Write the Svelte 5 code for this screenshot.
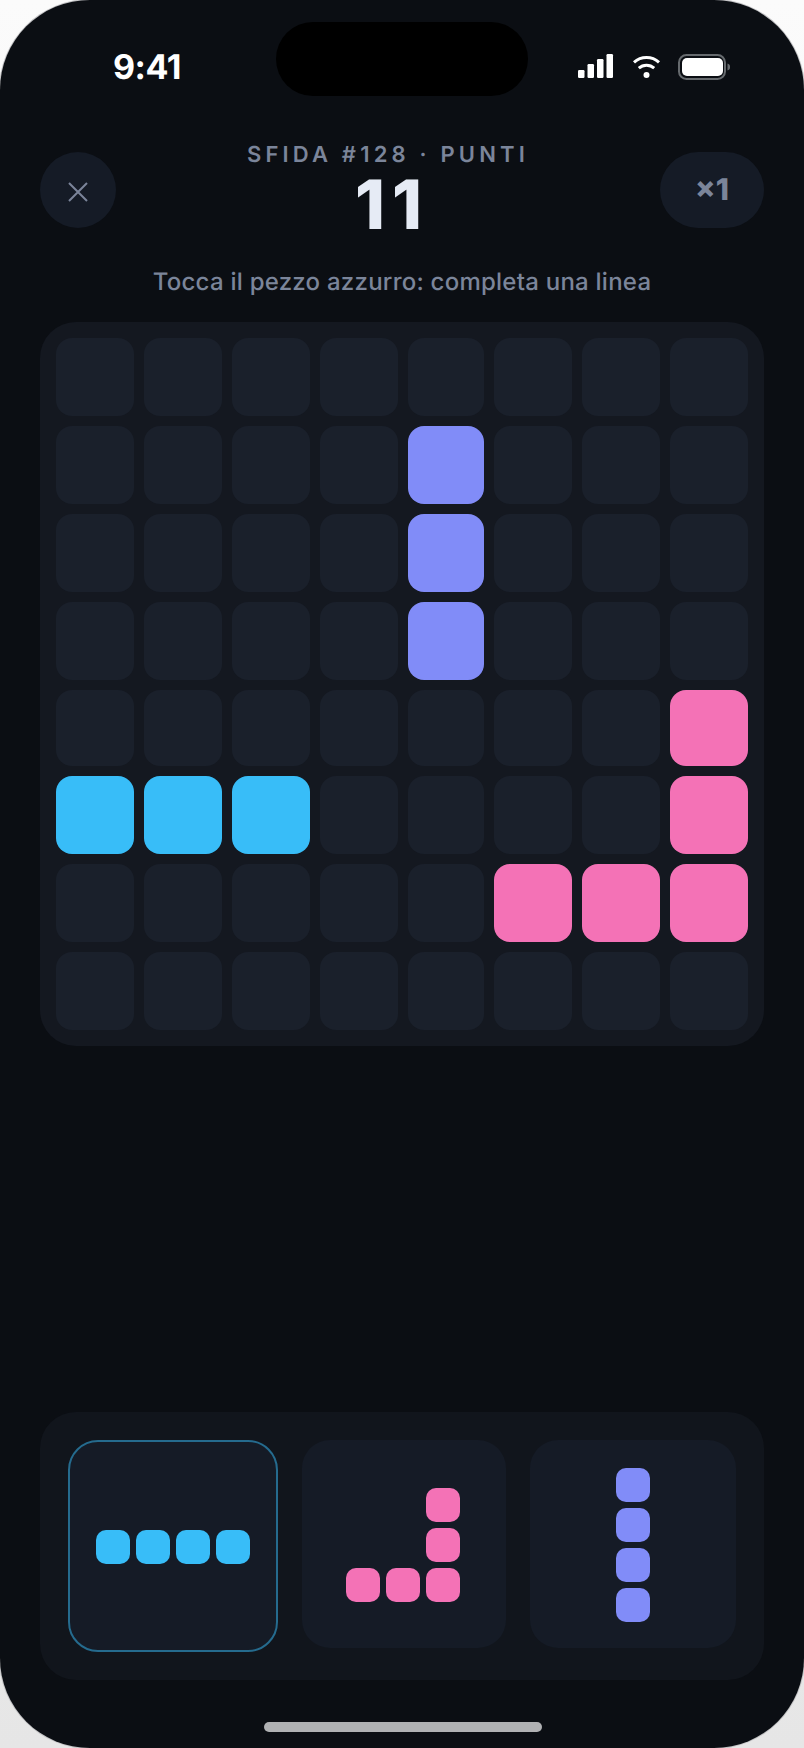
<script>
  const colors = { b: 'blue', p: 'pink', v: 'violet' };
  const rows = [
    '........',
    '....v...',
    '....v...',
    '....v...',
    '.......p',
    'bbb....p',
    '.....ppp',
    '........'
  ];
  const cells = rows.flatMap((r) => r.split(''));
  const pieces = [
    { cols: 4, color: 'blue', map: '1111', selected: true, cls: 'c1' },
    { cols: 3, color: 'pink', map: '001001111', selected: false, cls: 'c2' },
    { cols: 1, color: 'violet', map: '1111', selected: false, cls: 'c3' }
  ];
</script>

<div class="phone">
  <div class="island"></div>
  <div class="status">
    <span class="time">9:41</span>
    <svg class="status-icons" width="152" height="28" viewBox="0 0 152 28">
      <g fill="#fff">
        <rect x="0" y="16" width="6.5" height="8" rx="1.2" />
        <rect x="9.5" y="10" width="6.5" height="14" rx="1.2" />
        <rect x="19" y="5" width="6.5" height="19" rx="1.2" />
        <rect x="28.5" y="0" width="6.5" height="24" rx="1.2" />
        <circle cx="68.5" cy="21" r="3" />
      </g>
      <g fill="none" stroke="#fff" stroke-width="3">
        <path d="M60.8 14.2a11.500 11.500 0 0 1 15.400 0" />
        <path d="M56 8.400a18.600 18.600 0 0 1 25 0" />
      </g>
      <rect x="101" y="1" width="46" height="24" rx="7.500" fill="none" stroke="#666a6e" stroke-width="2" />
      <rect x="104" y="4" width="41" height="18" rx="5" fill="#fff" />
      <path d="M149.500 9.500c2 .8 2.600 2 2.600 3.500s-.6 2.700-2.600 3.500z" fill="#666a6e" />
    </svg>
  </div>

  <header class="top">
    <button class="close" aria-label="Chiudi">
      <svg width="20" height="20" viewBox="0 0 20 20">
        <path d="M1 1l18 18M19 1L1 19" stroke="#7b859a" stroke-width="2" fill="none" />
      </svg>
    </button>
    <div class="score">
      <div class="label">SFIDA #128 · PUNTI</div>
      <div class="value">11</div>
    </div>
    <div class="mult">×1</div>
  </header>

  <p class="hint">Tocca il pezzo azzurro: completa una linea</p>

  <section class="board">
    {#each cells as c}
      <div class="cell {colors[c] ?? ''}"></div>
    {/each}
  </section>

  <section class="tray">
    {#each pieces as piece}
      <div class="card {piece.cls}" class:selected={piece.selected}>
        <div class="piece" style="grid-template-columns: repeat({piece.cols}, 34px)">
          {#each piece.map.split('') as m}
            <div class="mini {m === '1' ? piece.color : ''}"></div>
          {/each}
        </div>
      </div>
    {/each}
  </section>

  <div class="home"></div>
</div>

<style>
  :global(body) {
    margin: 0;
    background: linear-gradient(180deg, #fbfbfb 0%, #e6e6e6 100%);
  }
  .phone {
    position: relative;
    width: 804px;
    height: 1748px;
    box-sizing: border-box;
    border-radius: 90px;
    overflow: hidden;
    background: #0b0e13;
    box-shadow: 0 0 0 1px #c4c4c6;
    font-family: Inter, "Liberation Sans", sans-serif;
    font-optical-sizing: none;
    text-rendering: geometricPrecision;
    display: flex;
    flex-direction: column;
    padding: 0 40px;
  }
  .island {
    position: absolute;
    top: 22px;
    left: 276px;
    width: 252px;
    height: 74px;
    border-radius: 37px;
    background: #000;
  }
  .status {
    display: flex;
    justify-content: space-between;
    align-items: flex-start;
    height: 152px;
    padding: 47px 0 0 73px;
    box-sizing: border-box;
  }
  .time {
    color: #fff;
    font-size: 34px;
    font-weight: 700;
    line-height: 41px;
    letter-spacing: -0.5px;
  }
  .status-icons {
    margin: 7px 34px 0 0;
    display: block;
  }
  .top {
    display: flex;
    justify-content: space-between;
    align-items: flex-start;
    height: 76px;
  }
  .close {
    width: 76px;
    height: 76px;
    border: 0;
    padding: 3px 0 0;
    border-radius: 50%;
    background: #151b26;
    display: flex;
    align-items: center;
    justify-content: center;
  }
  .close svg { display: block; }
  .score {
    display: flex;
    flex-direction: column;
    align-items: center;
    margin-top: -11px;
  }
  .label {
    color: #7b859a;
    font-size: 22px;
    font-weight: 600;
    line-height: 28px;
    letter-spacing: 4.18px;
  }
  .value {
    color: #e6ebf5;
    font-size: 68px;
    font-weight: 800;
    line-height: 72px;
    letter-spacing: 7px;
    padding-left: 8px;
  }
  .mult {
    width: 104px;
    height: 76px;
    border-radius: 38px;
    background: #151b26;
    color: #7b859a;
    font-size: 30px;
    font-weight: 800;
    display: flex;
    align-items: center;
    justify-content: center;
  }
  .hint {
    margin: 37px 0 0;
    height: 34px;
    text-align: center;
    color: #7b859a;
    font-size: 24px;
    font-weight: 500;
    line-height: 34px;
    letter-spacing: 0.24px;
  }
  .board {
    margin-top: 23px;
    width: 724px;
    box-sizing: border-box;
    padding: 16px;
    border-radius: 36px;
    background: #141820;
    display: grid;
    grid-template-columns: 78px 78px 78px 78px 76px 78px 78px 78px;
    grid-template-rows: 78px 78px 78px 78px 76px 78px 78px 78px;
    gap: 10px;
  }
  .cell {
    border-radius: 16px;
    background: #1a202b;
  }
  .blue { background: #38bdf8; }
  .pink { background: #f472b6; }
  .violet { background: #818cf8; }
  .tray {
    position: absolute;
    left: 40px;
    top: 1412px;
    width: 724px;
    height: 268px;
    box-sizing: border-box;
    padding: 28px;
    border-radius: 36px;
    background: #11151c;
    display: grid;
    grid-template-columns: 210px 204px 206px;
    gap: 24px;
    align-items: start;
  }
  .card {
    height: 208px;
    box-sizing: border-box;
    border-radius: 28px;
    background: #151b26;
    display: flex;
    align-items: center;
    justify-content: center;
    padding-top: 2px;
  }
  .c2 { padding-right: 2px; }
  .card.selected {
    height: 212px;
    border: 2px solid #256b8e;
    border-radius: 30px;
    padding-top: 2px;
  }
  .piece {
    display: grid;
    gap: 6px;
  }
  .mini {
    width: 34px;
    height: 34px;
    border-radius: 10px;
  }
  .home {
    position: absolute;
    left: 264px;
    top: 1722px;
    width: 278px;
    height: 10px;
    border-radius: 5px;
    background: #b0b1b3;
  }
</style>
